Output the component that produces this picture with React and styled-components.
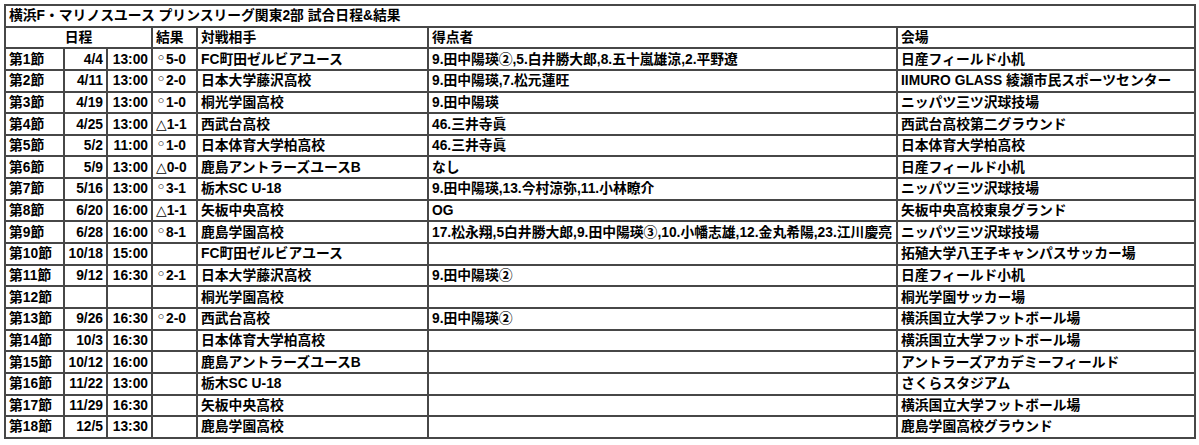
import styled, { createGlobalStyle } from 'styled-components'

const GlobalStyles = createGlobalStyle`
  html, body {
    margin: 0;
    padding: 0;
    background: #ffffff;
  }
  body {
    font-family: "Liberation Sans", "Noto Sans CJK JP", sans-serif;
    color: #000;
  }
`

// [節, 日付, 時刻, 勝敗記号, スコア, 対戦相手, 得点者, 会場]
const matches = [
  ['第1節', '4/4', '13:00', '◦', '5-0', 'FC町田ゼルビアユース', '9.田中陽瑛②,5.白井勝大郎,8.五十嵐雄涼,2.平野遼', '日産フィールド小机'],
  ['第2節', '4/11', '13:00', '◦', '2-0', '日本大学藤沢高校', '9.田中陽瑛,7.松元蓮旺', 'IIMURO GLASS 綾瀬市民スポーツセンター'],
  ['第3節', '4/19', '13:00', '◦', '1-0', '桐光学園高校', '9.田中陽瑛', 'ニッパツ三ツ沢球技場'],
  ['第4節', '4/25', '13:00', '△', '1-1', '西武台高校', '46.三井寺眞', '西武台高校第二グラウンド'],
  ['第5節', '5/2', '11:00', '◦', '1-0', '日本体育大学柏高校', '46.三井寺眞', '日本体育大学柏高校'],
  ['第6節', '5/9', '13:00', '△', '0-0', '鹿島アントラーズユースB', 'なし', '日産フィールド小机'],
  ['第7節', '5/16', '13:00', '◦', '3-1', '栃木SC U-18', '9.田中陽瑛,13.今村涼弥,11.小林瞭介', 'ニッパツ三ツ沢球技場'],
  ['第8節', '6/20', '16:00', '△', '1-1', '矢板中央高校', 'OG', '矢板中央高校東泉グランド'],
  ['第9節', '6/28', '16:00', '◦', '8-1', '鹿島学園高校', '17.松永翔,5白井勝大郎,9.田中陽瑛③,10.小幡志雄,12.金丸希陽,23.江川慶亮', 'ニッパツ三ツ沢球技場'],
  ['第10節', '10/18', '15:00', '', '', 'FC町田ゼルビアユース', '', '拓殖大学八王子キャンパスサッカー場'],
  ['第11節', '9/12', '16:30', '◦', '2-1', '日本大学藤沢高校', '9.田中陽瑛②', '日産フィールド小机'],
  ['第12節', '', '', '', '', '桐光学園高校', '', '桐光学園サッカー場'],
  ['第13節', '9/26', '16:30', '◦', '2-0', '西武台高校', '9.田中陽瑛②', '横浜国立大学フットボール場'],
  ['第14節', '10/3', '16:30', '', '', '日本体育大学柏高校', '', '横浜国立大学フットボール場'],
  ['第15節', '10/12', '16:00', '', '', '鹿島アントラーズユースB', '', 'アントラーズアカデミーフィールド'],
  ['第16節', '11/22', '13:00', '', '', '栃木SC U-18', '', 'さくらスタジアム'],
  ['第17節', '11/29', '16:30', '', '', '矢板中央高校', '', '横浜国立大学フットボール場'],
  ['第18節', '12/5', '13:30', '', '', '鹿島学園高校', '', '鹿島学園高校グラウンド'],
]

const widths = [59, 43, 45, 45, 231, 469, 298]

function App() {
  return (
    <>
      <GlobalStyles />
      <Page>
        <Schedule>
          <colgroup>
            {widths.map((w, i) => (
              <col key={i} style={{ width: w }} />
            ))}
          </colgroup>
          <tbody>
            <Row>
              <Cell colSpan={7}>横浜F・マリノスユース プリンスリーグ関東2部 試合日程&amp;結果</Cell>
            </Row>
            <Row>
              <Cell colSpan={3} $align="center">日程</Cell>
              <Cell>結果</Cell>
              <Cell>対戦相手</Cell>
              <Cell>得点者</Cell>
              <Cell>会場</Cell>
            </Row>
            {matches.map((m) => (
              <Row key={m[0]}>
                <Cell>{m[0]}</Cell>
                <Cell $align="right">{m[1]}</Cell>
                <Cell $align="right">{m[2]}</Cell>
                <Cell>
                  <Mark $small={m[3] === '◦'}>{m[3]}</Mark>
                  {m[4]}
                </Cell>
                <Cell>{m[5]}</Cell>
                <Cell>{m[6]}</Cell>
                <Cell>{m[7]}</Cell>
              </Row>
            ))}
          </tbody>
        </Schedule>
      </Page>
    </>
  )
}

const Page = styled.div`
  padding: 4px 0 0 4px;
`
const Schedule = styled.table`
  width: 1190px;
  table-layout: fixed;
  border-collapse: collapse;
  border: 2px solid #3a3a3a;
`
const Row = styled.tr`
  height: 21.65px;
`
const Cell = styled.td`
  border: 2px solid #474747;
  padding: 0 3px;
  font-size: 13.8px;
  font-weight: bold;
  line-height: 17px;
  white-space: nowrap;
  overflow: hidden;
  text-align: ${(p) => p.$align || 'left'};
`
const Mark = styled.span`
  font-family: "DejaVu Sans", "Liberation Sans", "Noto Sans CJK JP", sans-serif;
  font-weight: normal;
  font-size: ${(p) => (p.$small ? '17px' : '13.8px')};
  line-height: 0;
`

export default App
